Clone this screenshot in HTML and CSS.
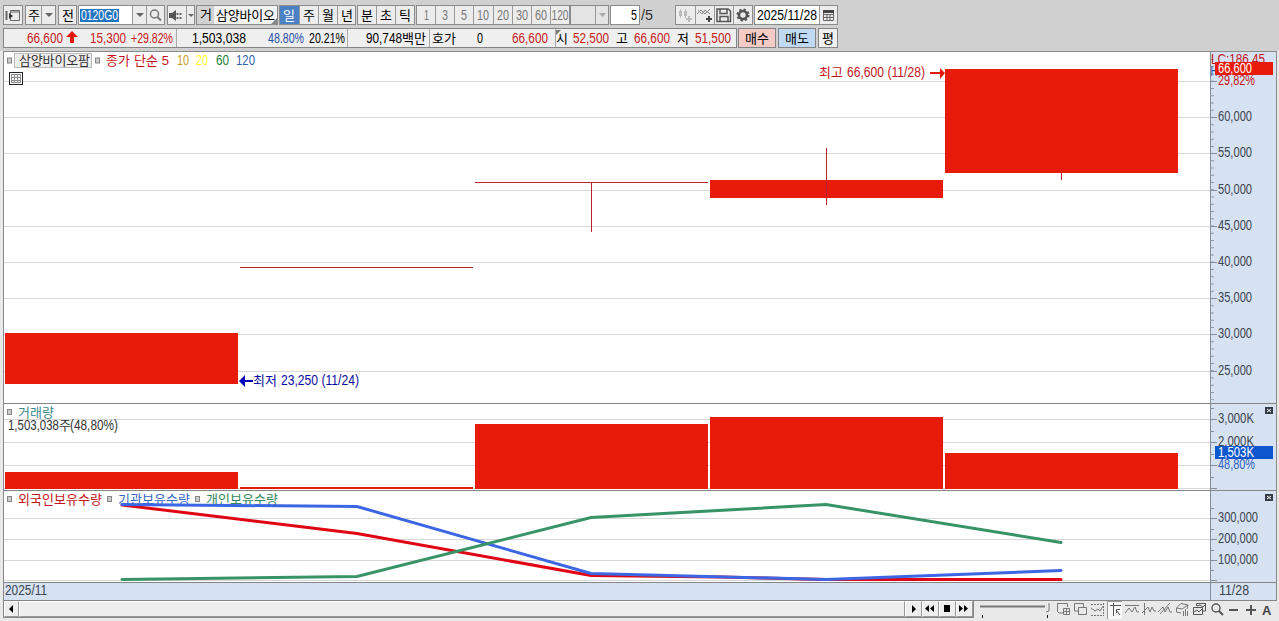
FILE: index.html
```
<!DOCTYPE html>
<html lang="ko">
<head>
<meta charset="utf-8">
<title>삼양바이오팜</title>
<link rel="stylesheet" href="styles.css">
</head>
<body>
<div class="app">
  <header class="toolbar">
    <div class="group w20"><button class="cell"><svg width="18" height="18"><path d="M6.500 8V4.500H15.500V14.500H6.500V12M6 6H15" class="ln"/><path d="M2.500 5V14" class="ln" stroke-width="2"/><path d="M5 7L9 10L5 13Z" fill="#333"/></svg></button></div>
    <div class="group w31 ml2"><button class="cell w15"><svg width="15" height="18"><text x="2" y="14" textLength="11">주</text></svg></button><button class="cell"><svg width="13" height="18"><path d="M3 7H11L7 11Z" class="arrow"/></svg></button></div>
    <div class="group w19 ml2"><button class="cell"><svg width="17" height="18"><text x="3" y="14" textLength="11">전</text></svg></button></div>
    <div class="group w87 ml1"><div class="cell white w53"><svg width="53" height="18"><rect x="1" y="3" width="39" height="13" fill="#2375c0"/><text x="2" y="14" textLength="37" class="num" lengthAdjust="spacingAndGlyphs" fill="#fff">0120G0</text></svg></div><button class="cell w14"><svg width="13" height="18"><path d="M3 7H11L7 11Z" class="arrow"/></svg></button><button class="cell"><svg width="17" height="18"><circle cx="7.500" cy="8" r="4" fill="none" stroke="#777" stroke-width="1.500"/><path d="M10.500 11L14 14.500" stroke="#777" stroke-width="2"/></svg></button></div>
    <div class="group w28 ml2"><button class="cell w18"><svg width="18" height="18"><path d="M1 7H4L8 4V15L4 12H1Z" fill="#555"/><path d="M9.500 7V13M12.500 7V13" stroke="#666" stroke-width="2" stroke-dasharray="2 2"/></svg></button><button class="cell"><svg width="8" height="18"><path d="M1 8H7L4 11Z" class="arrow"/></svg></button></div>
    <div class="group w82 ml1"><div class="cell tint w17"><svg width="17" height="18"><text x="3" y="13" textLength="11">거</text></svg></div><div class="cell plain"><svg width="63" height="18"><text x="2" y="14" textLength="59">삼양바이오</text><path d="M63 12V18H57Z" fill="#888"/></svg></div></div>
    <div class="group w77 ml1"><button class="cell on w19"><svg width="18" height="18"><text x="3" y="14" textLength="12">일</text></svg></button><button class="cell w19"><svg width="18" height="18"><text x="3" y="14" textLength="12">주</text></svg></button><button class="cell w19"><svg width="18" height="18"><text x="3" y="14" textLength="12">월</text></svg></button><button class="cell"><svg width="18" height="18"><text x="3" y="14" textLength="12">년</text></svg></button></div>
    <div class="group w58 ml1"><button class="cell w18"><svg width="18" height="18"><text x="3" y="14" textLength="12">분</text></svg></button><button class="cell w19"><svg width="18" height="18"><text x="3" y="14" textLength="12">초</text></svg></button><button class="cell"><svg width="18" height="18"><text x="3" y="14" textLength="12">틱</text></svg></button></div>
    <div class="group mins num ml1"><button class="cell"><svg width="18" height="18"><text x="7" y="14" textLength="5" lengthAdjust="spacingAndGlyphs">1</text></svg></button><button class="cell"><svg width="18" height="18"><text x="6" y="14" textLength="6" lengthAdjust="spacingAndGlyphs">3</text></svg></button><button class="cell"><svg width="18" height="18"><text x="6" y="14" textLength="6" lengthAdjust="spacingAndGlyphs">5</text></svg></button><button class="cell"><svg width="18" height="18"><text x="3" y="14" textLength="12" lengthAdjust="spacingAndGlyphs">10</text></svg></button><button class="cell"><svg width="18" height="18"><text x="3" y="14" textLength="12" lengthAdjust="spacingAndGlyphs">20</text></svg></button><button class="cell"><svg width="18" height="18"><text x="3" y="14" textLength="12" lengthAdjust="spacingAndGlyphs">30</text></svg></button><button class="cell"><svg width="18" height="18"><text x="3" y="14" textLength="12" lengthAdjust="spacingAndGlyphs">60</text></svg></button><button class="cell"><svg width="18" height="18"><text x="0.500" y="14" textLength="17" lengthAdjust="spacingAndGlyphs">120</text></svg></button></div>
    <div class="group w39"><div class="cell off w24"></div><button class="cell off"><svg width="13" height="18"><path d="M3 7H10L6.500 11Z" fill="#aaa"/></svg></button></div>
    <div class="group w30 ml1"><div class="cell white"><svg width="28" height="18"><text x="20" y="14" textLength="6" class="num" lengthAdjust="spacingAndGlyphs">5</text></svg></div></div>
    <svg class="pages num" width="35" height="20"><text x="1" y="15" textLength="12" lengthAdjust="spacingAndGlyphs" fill="#333">/5</text></svg>
    <div class="group w78">
      <button class="cell w19"><svg width="18" height="18"><path d="M4.500 3V12M9.500 3V12" stroke="#bbb"/><path d="M3 5H6V10H3ZM8 5H11V10H8Z" fill="#bbb"/><path d="M10 13H16M13 10V16" stroke="#bbb" stroke-width="2"/></svg></button>
      <button class="cell w19"><svg width="18" height="18"><path d="M1 8L5 4L9 8L14 3M2 4L6 8L9 4L14 8" fill="none" stroke="#888"/><path d="M10 13H16M13 10V16" stroke="#444" stroke-width="2"/></svg></button>
      <button class="cell w19"><svg width="18" height="18"><path d="M2 3H13L15.500 5V15.500H2ZM5 3V7.500H12V3M5 15V10.500H13V15" fill="none" stroke="#555" stroke-width="1.500"/></svg></button>
      <button class="cell"><svg width="18" height="18"><circle cx="9" cy="9" r="4" fill="none" stroke="#555" stroke-width="2.600"/><circle cx="9" cy="9" r="5.700" fill="none" stroke="#555" stroke-width="1.800" stroke-dasharray="2.200 2.277"/></svg></button>
    </div>
    <div class="group w84 ml1"><div class="cell white w64"><svg width="64" height="18"><text x="2" y="14" textLength="60" class="num" lengthAdjust="spacingAndGlyphs">2025/11/28</text></svg></div><button class="cell"><svg width="17" height="18"><path d="M3.500 5V14.500H13.500V5M3.500 8.500H13.500M3.500 11.500H13.500M7 8V14M10 8V14" fill="none" stroke="#666"/><path d="M3 4H14V7H3Z" fill="#444"/></svg></button></div>
  </header>

  <section class="quotes">
    <div class="quote w734">
      <div class="qcell w172 num"><svg width="171" height="18"><text x="23" y="14" textLength="36" lengthAdjust="spacingAndGlyphs" class="up">66,600</text><path d="M68 2L74 8H70V14H66V8H62Z" fill="#e51a0c"/><text x="86" y="14" textLength="36" lengthAdjust="spacingAndGlyphs" class="up">15,300</text><text x="127" y="14" textLength="42" lengthAdjust="spacingAndGlyphs" class="up">+29.82%</text></svg></div>
      <div class="qcell w171 num"><svg width="171" height="18"><text x="15" y="14" textLength="54" lengthAdjust="spacingAndGlyphs">1,503,038</text><text x="91" y="14" textLength="36" lengthAdjust="spacingAndGlyphs" fill="#2850a8">48.80%</text><text x="132" y="14" textLength="36" lengthAdjust="spacingAndGlyphs">20.21%</text></svg></div>
      <div class="qcell w82 num"><svg width="81" height="18"><text x="18" y="14" textLength="36" lengthAdjust="spacingAndGlyphs">90,748</text><text x="54" y="14" textLength="24" class="kr">백만</text></svg></div>
      <div class="qcell w126 num"><svg width="125" height="18"><text x="2" y="14" textLength="24" class="kr">호가</text><text x="47" y="14" textLength="6" lengthAdjust="spacingAndGlyphs">0</text><text x="82" y="14" textLength="36" lengthAdjust="spacingAndGlyphs" class="up">66,600</text></svg></div>
      <div class="qcell num"><svg width="178" height="18"><path d="M0 1H5L0 6Z" fill="#777"/><text x="0" y="14" textLength="11" class="kr">시</text><text x="17" y="14" textLength="36" lengthAdjust="spacingAndGlyphs" class="up">52,500</text><text x="60" y="14" textLength="12" class="kr">고</text><text x="78" y="14" textLength="36" lengthAdjust="spacingAndGlyphs" class="up">66,600</text><text x="121" y="14" textLength="12" class="kr">저</text><text x="139" y="14" textLength="36" lengthAdjust="spacingAndGlyphs" class="up">51,500</text></svg></div>
    </div>
    <button class="quote buy"><svg width="36" height="18"><text x="6" y="14" textLength="24">매수</text></svg></button>
    <button class="quote sell"><svg width="36" height="18"><text x="6" y="14" textLength="24">매도</text></svg></button>
    <button class="quote avg"><svg width="17" height="18"><text x="3" y="14" textLength="11">평</text></svg></button>
  </section>

  <main class="chart">
    <section class="panel price">
      <svg class="plot" width="1206" height="351" viewBox="4 52 1206 351">
        <path class="grid" d="M4 81.500H1210M4 117.500H1210M4 153.500H1210M4 190.500H1210M4 226.500H1210M4 262.500H1210M4 298.500H1210M4 334.500H1210M4 371.500H1210"/>
        <path class="bar" d="M5 333H238V384H5ZM710 180H943V198H710ZM945 69H1178V173H945Z"/>
        <path class="wick" d="M240 267H473V268H240ZM475 182H708V183H475ZM591 182H592V232H591ZM826 148H827V205H826ZM1061 173H1062V180H1061Z"/>
        <rect x="7.500" y="58" width="4" height="5" class="mark"/>
        <rect x="14.500" y="53.500" width="77" height="14" fill="#eee" stroke="#bbb"/>
        <text x="19" y="65" textLength="71" fill="#333">삼양바이오팜</text>
        <rect x="95.500" y="58" width="4" height="5" class="mark"/>
        <text x="106" y="65" textLength="63" fill="#c4141c">종가 단순 5</text>
        <g class="num"><text x="177" y="65" textLength="12" lengthAdjust="spacingAndGlyphs" fill="#c8a020">10</text><text x="196" y="65" textLength="12" lengthAdjust="spacingAndGlyphs" fill="#ffff30">20</text><text x="216" y="65" textLength="13" lengthAdjust="spacingAndGlyphs" fill="#168038">60</text><text x="236" y="65" textLength="19" lengthAdjust="spacingAndGlyphs" fill="#345fac">120</text></g>
        <rect x="9.500" y="72.500" width="13" height="12" fill="#fff" stroke="#222"/><path d="M11.500 74.500H20.500V82.500H11.500ZM11 77.500H21M11 80.500H21M14.500 74V83M17.500 74V83" fill="none" stroke="#888"/>
        <g class="num" fill="#c4141c"><text x="819" y="77" textLength="24" class="kr">최고</text><text x="847" y="77" textLength="78" lengthAdjust="spacingAndGlyphs">66,600 (11/28)</text></g>
        <path d="M930 72H940V68L945 73L940 79V74H930Z" fill="#e51a0c"/>
        <path d="M253 380H245V375L239 381L245 387V382H253Z" fill="#00b"/>
        <g class="num" fill="#0b0ba0"><text x="253" y="385" textLength="24" class="kr">최저</text><text x="281" y="385" textLength="78" lengthAdjust="spacingAndGlyphs">23,250 (11/24)</text></g>
      </svg>
      <svg class="axis num" width="65" height="351" viewBox="1211 52 65 351">
        <path class="minor" d="M1212.500 59V400"/>
        <path class="major" d="M1211 81.500H1217M1211 117.500H1217M1211 153.500H1217M1211 190.500H1217M1211 226.500H1217M1211 262.500H1217M1211 298.500H1217M1211 334.500H1217M1211 371.500H1217"/>
        <text x="1211" y="64" textLength="54" lengthAdjust="spacingAndGlyphs" fill="#c4141c">LC:186.45</text><text x="1210.500" y="76" textLength="7" lengthAdjust="spacingAndGlyphs" fill="#2850c0">H</text>
        <text x="1218" y="85" textLength="37" lengthAdjust="spacingAndGlyphs" fill="#c4141c">29,82%</text>
        <rect x="1215" y="62" width="58" height="13" fill="#e81b0a"/><text x="1218" y="73" textLength="34" lengthAdjust="spacingAndGlyphs" fill="#fff">66,600</text>
        <g fill="#3c4450"><text x="1218" y="121" textLength="34" lengthAdjust="spacingAndGlyphs">60,000</text><text x="1218" y="157" textLength="34" lengthAdjust="spacingAndGlyphs">55,000</text><text x="1218" y="194" textLength="34" lengthAdjust="spacingAndGlyphs">50,000</text><text x="1218" y="230" textLength="34" lengthAdjust="spacingAndGlyphs">45,000</text><text x="1218" y="266" textLength="34" lengthAdjust="spacingAndGlyphs">40,000</text><text x="1218" y="302" textLength="34" lengthAdjust="spacingAndGlyphs">35,000</text><text x="1218" y="338" textLength="34" lengthAdjust="spacingAndGlyphs">30,000</text><text x="1218" y="375" textLength="34" lengthAdjust="spacingAndGlyphs">25,000</text></g>
      </svg>
    </section>
    <section class="panel volume">
      <svg class="plot" width="1206" height="86" viewBox="4 404 1206 86">
        <path class="grid" d="M4 419.500H1210M4 442.500H1210M4 465.500H1210M4 488.500H1210"/>
        <path class="bar" d="M5 472H238V489H5ZM240 487H473V489H240ZM475 424H708V489H475ZM710 417H943V489H710ZM945 453H1178V489H945Z"/>
        <rect x="7.500" y="409.500" width="4" height="5" class="mark"/>
        <text x="18" y="417" textLength="36" fill="#3a8a8c">거래량</text>
        <g class="num" fill="#333"><text x="8" y="430" textLength="51" lengthAdjust="spacingAndGlyphs">1,503,038</text><text x="59" y="430" textLength="11" class="kr">주</text><text x="70" y="430" textLength="48" lengthAdjust="spacingAndGlyphs">(48,80%)</text></g>
      </svg>
      <svg class="axis num" width="65" height="86" viewBox="1211 404 65 86">
        <path class="major" d="M1211 419.500H1217M1211 442.500H1217M1211 465.500H1217M1211 488.500H1217M1211 408.500H1214M1211 431.500H1214M1211 454.500H1214M1211 477.500H1214"/>
        <text x="1218" y="423" textLength="36" lengthAdjust="spacingAndGlyphs" fill="#3c4450">3,000K</text><text x="1218" y="446" textLength="36" lengthAdjust="spacingAndGlyphs" fill="#3c4450">2,000K</text>
        <rect x="1215" y="446" width="58" height="13" fill="#0d57ce"/><text x="1218" y="457" textLength="36" lengthAdjust="spacingAndGlyphs" fill="#fff">1,503K</text>
        <text x="1218" y="469" textLength="37" lengthAdjust="spacingAndGlyphs" fill="#2b61bd">48,80%</text>
        <rect x="1265" y="407" width="8" height="7" fill="#333b46"/><path d="M1267 409L1271 412M1271 409L1267 412" stroke="#fff"/>
      </svg>
    </section>
    <section class="panel holdings">
      <svg class="plot" width="1206" height="91" viewBox="4 491 1206 91">
        <path class="grid" d="M4 518.500H1210M4 539.500H1210M4 560.500H1210M4 580.500H1210"/>
        <rect x="7.500" y="496.500" width="4" height="5" class="mark"/><rect x="107.500" y="496.500" width="4" height="5" class="mark"/><rect x="195.500" y="496.500" width="4" height="5" class="mark"/>
        <text x="18" y="504" textLength="84" fill="#c4141c">외국인보유수량</text><text x="118" y="504" textLength="72" fill="#3467c5">기관보유수량</text><text x="206" y="504" textLength="72" fill="#31865c">개인보유수량</text>
        <g class="series"><path stroke="#e10613" d="M122 505L357 533.500L591 575.500L720 577L826 579.500H1061"/><path stroke="#3c66e4" d="M122 504.500L357 506.500L591 573.500L826 579.500L1061 570.500"/><path stroke="#389366" d="M122 579.500L357 576.500L591 517.500L826 504.500L1061 542.500"/></g>
      </svg>
      <svg class="axis num" width="65" height="91" viewBox="1211 491 65 91">
        <path class="major" d="M1211 518.500H1217M1211 539.500H1217M1211 560.500H1217M1211 580.500H1217M1211 508.500H1214M1211 529.500H1214M1211 550.500H1214M1211 570.500H1214"/>
        <g fill="#3c4450"><text x="1218" y="522" textLength="40" lengthAdjust="spacingAndGlyphs">300,000</text><text x="1218" y="543" textLength="40" lengthAdjust="spacingAndGlyphs">200,000</text><text x="1218" y="564" textLength="40" lengthAdjust="spacingAndGlyphs">100,000</text></g>
        <rect x="1265" y="494" width="8" height="7" fill="#333b46"/><path d="M1267 496L1271 499M1271 496L1267 499" stroke="#fff"/>
      </svg>
    </section>
    <section class="panel dates num">
      <svg class="plot" width="1206" height="17"><text x="1" y="12" textLength="42" lengthAdjust="spacingAndGlyphs" fill="#3c4450">2025/11</text></svg>
      <svg class="axis" width="65" height="17"><text x="8" y="12" textLength="30" lengthAdjust="spacingAndGlyphs" fill="#3c4450">11/28</text></svg>
    </section>
  </main>

  <footer class="bottom">
    <div class="scroll">
      <button class="step first"><svg width="13" height="14"><path d="M8 3V11L4 7Z"/></svg></button>
      <div class="thumb"></div>
      <button class="step"><svg width="14" height="14"><path d="M6 3V11L10 7Z"/></svg></button>
      <button class="step"><svg width="14" height="14"><path d="M6 3V10L2 6.500ZM11 3V10L7 6.500Z"/></svg></button>
      <button class="step"><svg width="14" height="14"><path d="M4 3H10V10H4Z"/></svg></button>
      <button class="step"><svg width="14" height="14"><path d="M2 3V10L6 6.500ZM7 3V10L11 6.500Z"/></svg></button>
    </div>
    <svg class="tools" width="304" height="20" viewBox="975 601 304 20">
      <path d="M980 606.500H1045" stroke="#777" stroke-width="2"/><path d="M1046 612L1049 611V603" fill="none" stroke="#777"/><path d="M982.500 615V618M1047.500 615V618" stroke="#111"/>
      <g class="ico">
        <path d="M1064 613H1059L1057.500 611.500V603.500H1067.500V607M1063.500 608.500H1069.500V614.500H1063.500ZM1066.500 609V614M1064 611.500H1069"/>
        <path d="M1078 611H1074.500V603.500H1083.500V607M1078.500 607.500H1086.500V614.500H1078.500Z"/>
        <path d="M1091 604.500H1104M1091 615.500H1104M1103.500 603V616" stroke-dasharray="2 1"/><path d="M1091 608L1095 611L1098 609L1100 611L1103 606"/>
      </g>
      <path d="M1107 601H1122V619H1107Z" fill="#f8f8f8"/><path d="M1107.500 619V601.500H1122" fill="none" stroke="#999"/>
      <g class="ico">
        <path d="M1110 605.500H1121M1113.500 603V616M1120 615L1116 610M1116.500 613V609.500H1120" stroke="#555"/>
        <path d="M1125 605.500H1139M1125 613L1129 608L1132 612L1135 607L1137 612H1139"/>
        <path d="M1144.500 603V615M1142 613L1148 607L1150 612L1152 607L1154 611H1156"/>
        <path d="M1160 614L1170 603M1158 612L1163 607L1165 612L1168 607L1170 612H1172"/>
        <path d="M1176.500 608L1181 603.500L1188 605L1187 609M1176.500 608L1182 609L1188 605M1176.500 608V612L1181 613M1183.500 611V616M1185.500 609V616M1187.500 611V616"/>
        <path d="M1196.500 606V603.500H1205.500V611H1203M1193.500 607.500H1202.500V614.500H1193.500ZM1194 612L1197 610L1199 612L1202 609M1197 606L1200 605L1203 607L1205 605" stroke="#555"/>
      </g>
      <circle cx="1216" cy="608" r="4" fill="none" stroke="#555" stroke-width="1.400"/><path d="M1219 611L1223 615" stroke="#555" stroke-width="2"/><path d="M1229 610H1238M1246 610H1256M1251 605V615" stroke="#555" stroke-width="2"/><text x="1262" y="615" class="bold" fill="#444">A</text>
    </svg>
  </footer>
</div>
</body>
</html>
```
FILE: styles.css
```
* { box-sizing: border-box; }
body { margin: 0; overflow: hidden; background: #e9e9e9; }
.app { width: 1279px; height: 621px; display: flex; flex-direction: column; background: linear-gradient(#d0d0d0 51px, #e9e9e9 51px); }
svg { display: block; flex: none; }
svg text { font-family: "Liberation Sans", "Noto Sans CJK KR", sans-serif; font-size: 13px; }
.num text, text.num { font-size: 14px; }
.num text.kr { font-size: 13px; }
button { margin: 0; padding: 0; border: 0; background: none; }

.toolbar { display: flex; height: 28px; padding: 5px 0 3px 3px; }
.group { display: flex; flex: none; height: 20px; border: 1px solid #8b8b8b; background: #ececec; }
.cell { flex: 1; min-width: 0; height: 18px; overflow: hidden; background: #ececec; }
.cell + .cell { border-left: 1px solid #999; }
.cell.white { background: #fff; }
.cell.plain { border-left: 0; background: #f3f3f3; }
.cell.tint { background: #d2d2d2; }
.cell.off { background: #e4e4e4; }
.cell.on { background: #4a80c4; fill: #fff; }
.cell.w14, .cell.w15, .cell.w17, .cell.w18, .cell.w19, .cell.w24, .cell.w53, .cell.w64 { flex: none; }
.mins { width: 154px; fill: #777; }
.ln { fill: none; stroke: #666; }
.arrow { fill: #666; }
.ml1 { margin-left: 1px; }
.ml2 { margin-left: 2px; }
.w14 { width: 14px; }
.w15 { width: 15px; }
.w17 { width: 17px; }
.w18 { width: 18px; }
.w19 { width: 19px; }
.w20 { width: 20px; }
.w24 { width: 24px; }
.w28 { width: 28px; }
.w30 { width: 30px; }
.w31 { width: 31px; }
.w39 { width: 39px; }
.w53 { width: 53px; }
.w58 { width: 58px; }
.w64 { width: 64px; }
.w77 { width: 77px; }
.w78 { width: 78px; }
.w82 { width: 82px; }
.w84 { width: 84px; }
.w87 { width: 87px; }

.quotes { display: flex; gap: 1px; height: 23px; padding-left: 3px; }
.quote { display: flex; flex: none; height: 20px; border: 1px solid #858585; background: #efefef; }
.w734 { width: 734px; }
.qcell { flex: none; height: 18px; overflow: hidden; }
.qcell + .qcell { border-left: 1px solid #aaa; }
.w172 { width: 172px; }
.w171 { width: 171px; }
.qcell.w82 { width: 82px; }
.w126 { width: 126px; }
.up { fill: #c8201c; }
.buy { width: 38px; background: #f5cbc6; }
.sell { width: 38px; margin-left: 1px; background: #c0daf3; }
.avg { width: 20px; margin-left: 1px; }

.chart { width: 1274px; height: 550px; margin-left: 3px; border: 1px solid #8b8b8b; border-bottom: 0; background: #fff; }
.panel { display: flex; border-bottom: 1px solid #858585; }
.axis { box-sizing: content-box; border-left: 1px solid #858c95; background: #d6e2f1; }
.dates { background: #d6e2f1; }
.grid { fill: none; stroke: #d7d7d7; }
.bar { fill: #e81b0a; }
.wick { fill: #b8242a; }
.mark { fill: #ccc; stroke: #888; }
.minor { fill: none; stroke: #9199a5; stroke-width: 3; stroke-dasharray: 1 6.240; }
.major { fill: none; stroke: #868e9a; }
.series { fill: none; stroke-width: 3; stroke-linecap: round; }

.bottom { display: flex; height: 20px; }
.scroll { display: flex; width: 971px; height: 17px; margin-left: 3px; border: 1px solid #858585; border-top: 0; background: #eee; }
.step { flex: none; width: 17px; border: 1px solid #999; border-left-color: #fff; border-top-color: #fff; background: #eee; }
.step.first { width: 15px; }
.thumb { flex: 1; border: 1px solid #999; border-left-color: #fff; border-top-color: #fff; }
.tools { margin-left: 1px; }
.ico { fill: none; stroke: #777; }
.bold { font-weight: bold; }
```
